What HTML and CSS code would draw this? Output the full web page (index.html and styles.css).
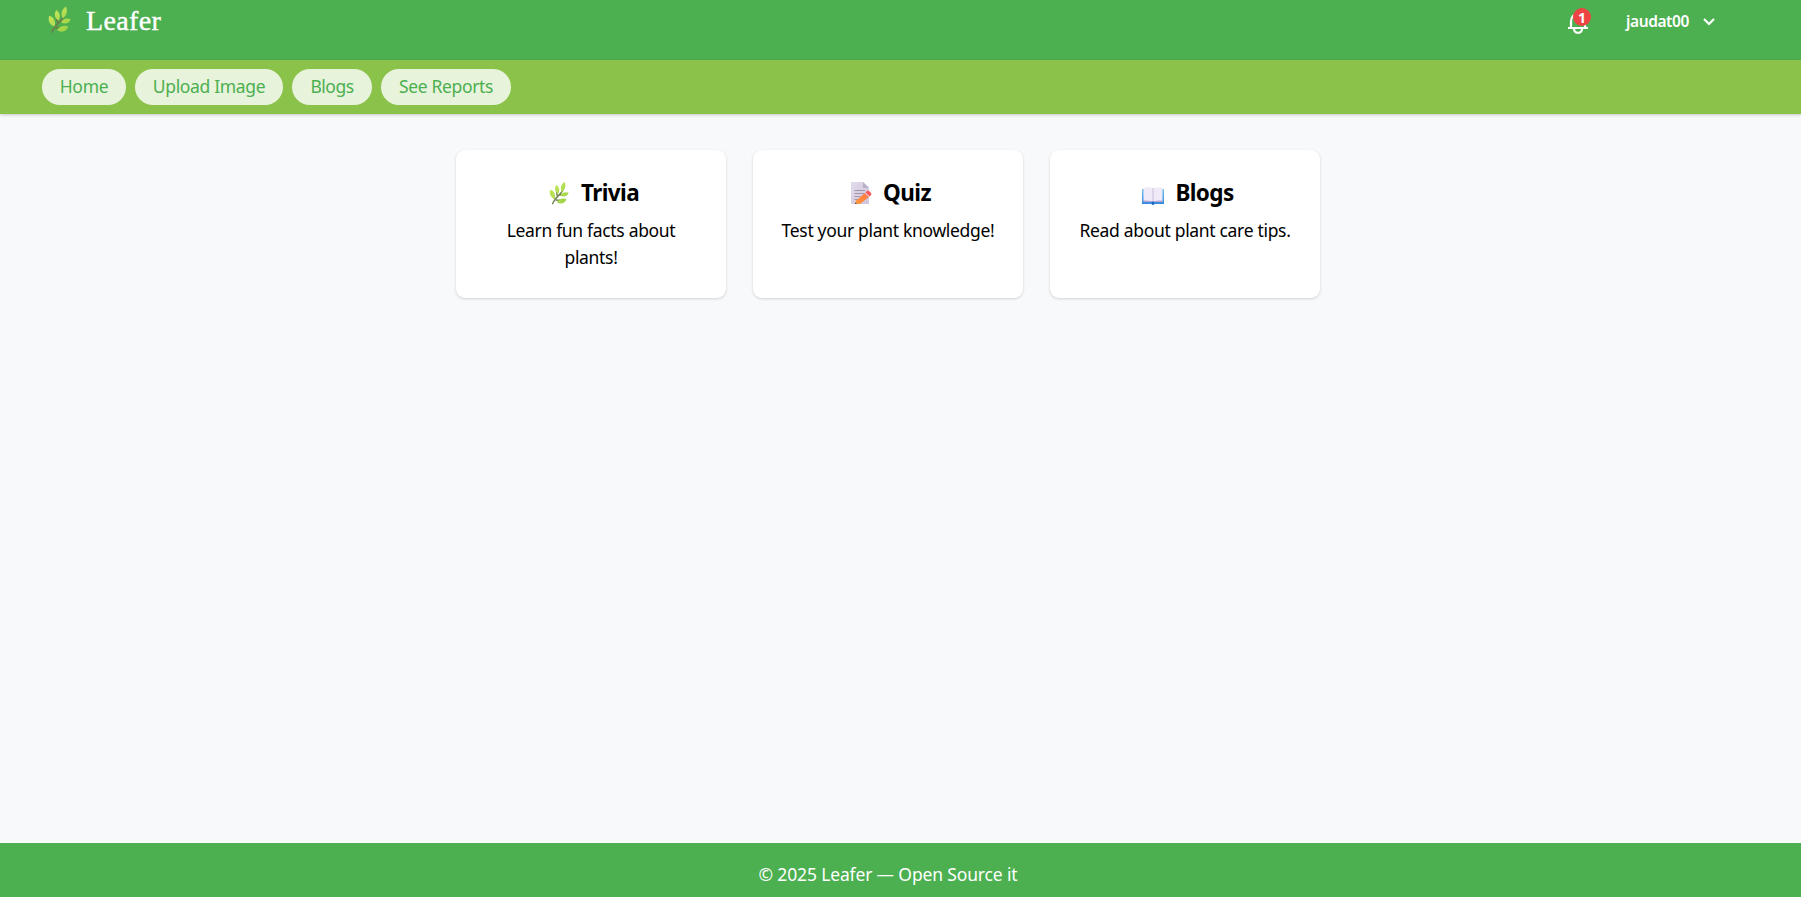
FILE: index.html
```
<!DOCTYPE html>
<html lang="en">
<head>
<meta charset="utf-8">
<title>Leafer</title>
<link rel="stylesheet" href="styles.css">
</head>
<body>
<svg class="defs" width="0" height="0" aria-hidden="true">
  <defs>
    <linearGradient id="leaf" x1="0" y1="0" x2="1" y2="1"><stop offset="0" stop-color="#cdea62"/><stop offset="1" stop-color="#97cf40"/></linearGradient>
    <linearGradient id="paper" x1="0" y1="0" x2="1" y2="1"><stop offset="0" stop-color="#e2dcea"/><stop offset="1" stop-color="#cfc4dc"/></linearGradient>
    <linearGradient id="pencil" x1="1" y1="0" x2="0" y2="1"><stop offset="0" stop-color="#ff7044"/><stop offset="1" stop-color="#ff9d3c"/></linearGradient>
    <linearGradient id="cover" x1="0" y1="0" x2="0" y2="1"><stop offset="0" stop-color="#7cc4ee"/><stop offset="1" stop-color="#2f86dc"/></linearGradient>
    <symbol id="herb" viewBox="0 0 24 28">
      <path d="M4 27C6 21 12 17 17 10M7 20C5 18 4 17 3.5 15M10 17C9 14 9 12 9 9M12 16C15 15 18 15 21 15M8 22C11 22 14 22 17 23" fill="none" stroke="#6b7f49" stroke-width="1.7"/>
      <path d="M1.200 9.500C6 10.500 8.200 15 7 20.500C2 19.500 -.5 15 1.200 9.500ZM8.500 3.500C12.500 6 13.500 10 11 14.500C6.800 12 6 8 8.500 3.500ZM18.800 0C21 5 19.500 9 15.500 12.500C13 8 14 3 18.800 0ZM23.800 13.200C20 11.500 15.500 12.500 13.500 16.500C18 19 22.200 17.500 23.800 13.200ZM21.200 20.800C17 19 11.500 20.500 9.500 24.700C14 27.500 19.500 26.500 21.200 20.800Z" fill="url(#leaf)"/>
    </symbol>
  </defs>
</svg>
<header class="header">
  <a class="brand">
    <svg class="brand-icon" width="23" height="28"><use href="#herb"/></svg>
    <span class="brand-name">Leafer</span>
  </a>
  <div class="account">
    <div class="bell">
      <svg width="20" height="22" viewBox="0 0 20 22" fill="none" stroke="#fff" stroke-width="2.2"><path d="M0 16H20M3 16V10C3 5 5.500 2 10 2S17 5 17 10V16M6 17C6 22 14 22 14 17"/></svg>
      <span class="badge">1</span>
    </div>
    <span class="user">jaudat00</span>
    <svg class="chevron" width="12" height="8" viewBox="0 0 12 8" fill="none" stroke="#fff" stroke-width="2.2"><path d="M1 1L6 6L11 1"/></svg>
  </div>
</header>
<nav class="nav">
  <a class="pill home"><span>Home</span></a>
  <a class="pill upload"><span>Upload Image</span></a>
  <a class="pill blogs"><span>Blogs</span></a>
  <a class="pill reports"><span>See Reports</span></a>
</nav>
<main class="main">
  <section class="card">
    <h3 class="title"><svg class="emoji herb" width="20" height="23"><use href="#herb"/></svg><span>Trivia</span></h3>
    <p class="text">Learn fun facts about<br>plants!</p>
  </section>
  <section class="card">
    <h3 class="title"><svg class="emoji memo" width="21" height="22" viewBox="0 0 21 22"><path d="M0 0H12L18 6V22H0Z" fill="url(#paper)"/><path d="M12 0L18 6H12Z" fill="#b9aec8"/><path d="M3.500 8.500H14M3.500 11.500H13M3.500 14.500H9M3.500 17.500H7" stroke="#a095ad"/><path d="M14.500 10.500L18.500 14.500L9 22L4 22L5 18.500Z" fill="url(#pencil)"/><path d="M14.500 10.500L16.500 8.500C18 8.500 20.500 11 20.500 12.500L18.500 14.500Z" fill="#f8585c"/><path d="M14.200 10.800L18.200 14.800" stroke="#d9c5d3" stroke-width="1.200"/><path d="M4.300 20.500L6 22H4Z" fill="#50404c"/></svg><span>Quiz</span></h3>
    <p class="text">Test your plant knowledge!</p>
  </section>
  <section class="card">
    <h3 class="title"><svg class="emoji book" width="22" height="18" viewBox="0 0 22 18"><path d="M0 2H22V17H13L11 18L9 17H0Z" fill="url(#cover)"/><path d="M1.500 1Q6 -.5 11 1Q16 -.5 20.500 1V14H1.500Z" fill="#f0eaf8"/><path d="M1.500 13.500Q6 13 11 14.500Q16 13 20.500 13.500V15H1.500Z" fill="#b9a5d5"/><path d="M11 1V14" stroke="#d7cbe6" stroke-width="1.500"/><path d="M10 15H12V17.500H10Z" fill="#1f62b5"/></svg><span>Blogs</span></h3>
    <p class="text">Read about plant care tips.</p>
  </section>
</main>
<footer class="footer"><span>© 2025 Leafer — Open Source it</span></footer>
</body>
</html>
```
FILE: styles.css
```
* { box-sizing: border-box; }
body {
  margin: 0;
  height: 897px;
  overflow: hidden;
  display: flex;
  flex-direction: column;
  background: #f8f9fb;
  font: 17.5px/27px "Noto Sans", "Open Sans", sans-serif;
  color: #000;
}
.defs { position: absolute; }
.header {
  flex: none;
  height: 60px;
  padding: 0 86px 0 48px;
  display: flex;
  justify-content: space-between;
  align-items: flex-start;
  background: #4caf50;
  color: #fff;
}
.brand { display: flex; gap: 15px; height: 42px; align-items: center; }
.brand-icon { margin-bottom: 2px; }
.brand-name { font: 28px/32px "Liberation Serif", serif; letter-spacing: .35px; -webkit-text-stroke: .4px #fff; }
.account { display: flex; align-items: center; height: 43px; }
.bell { position: relative; width: 20px; height: 22px; margin-top: 2px; }
.bell svg { display: block; }
.badge {
  position: absolute;
  left: 5px;
  top: -4px;
  width: 18px;
  height: 18px;
  border-radius: 50%;
  background: #ef4444;
  font: 700 14px/19px "Noto Sans", sans-serif;
  text-align: center;
}
.user { margin-left: 38px; width: 64px; font-size: 15.500px; font-weight: 600; letter-spacing: -.4px; white-space: nowrap; }
.chevron { margin-left: 13px; }
.nav {
  flex: none;
  height: 54px;
  padding: 9px 42px;
  display: flex;
  gap: 9px;
  background: #8bc34a;
  box-shadow: 0 1px 3px rgba(0, 0, 0, .2);
}
.pill {
  height: 36px;
  border-radius: 18px;
  background: #e8f3dc;
  color: #4caf50;
  line-height: 35px;
  text-align: center;
  white-space: nowrap;
}
.home { width: 84px; letter-spacing: -.3px; }
.upload { width: 148px; letter-spacing: -.35px; }
.blogs { width: 80px; letter-spacing: -.5px; }
.reports { width: 130px; letter-spacing: -.35px; }
.main { flex: 1; padding: 36px 25px 0 0; display: flex; justify-content: center; align-items: flex-start; gap: 27px; }
.card {
  width: 270px;
  height: 148px;
  padding: 27px 18px;
  border-radius: 9px;
  background: #fff;
  box-shadow: 0 1px 3px rgba(0, 0, 0, .16);
  text-align: center;
}
.title { margin: 0 0 9px; height: 32px; display: flex; justify-content: center; padding-left: 6px; font-size: 22.500px; line-height: 32px; letter-spacing: -.6px; }
.emoji { margin-top: 5px; flex: none; }
.herb { margin-right: 12px; }
.memo { margin-right: 11px; }
.book { margin: 10px 11px 0 0; }
.text { margin: -1px 0 0; letter-spacing: -.32px; white-space: nowrap; }
.footer { flex: none; height: 54px; padding: 18px 25px 0 0; background: #4caf50; color: #fff; text-align: center; letter-spacing: -.15px; }
```
